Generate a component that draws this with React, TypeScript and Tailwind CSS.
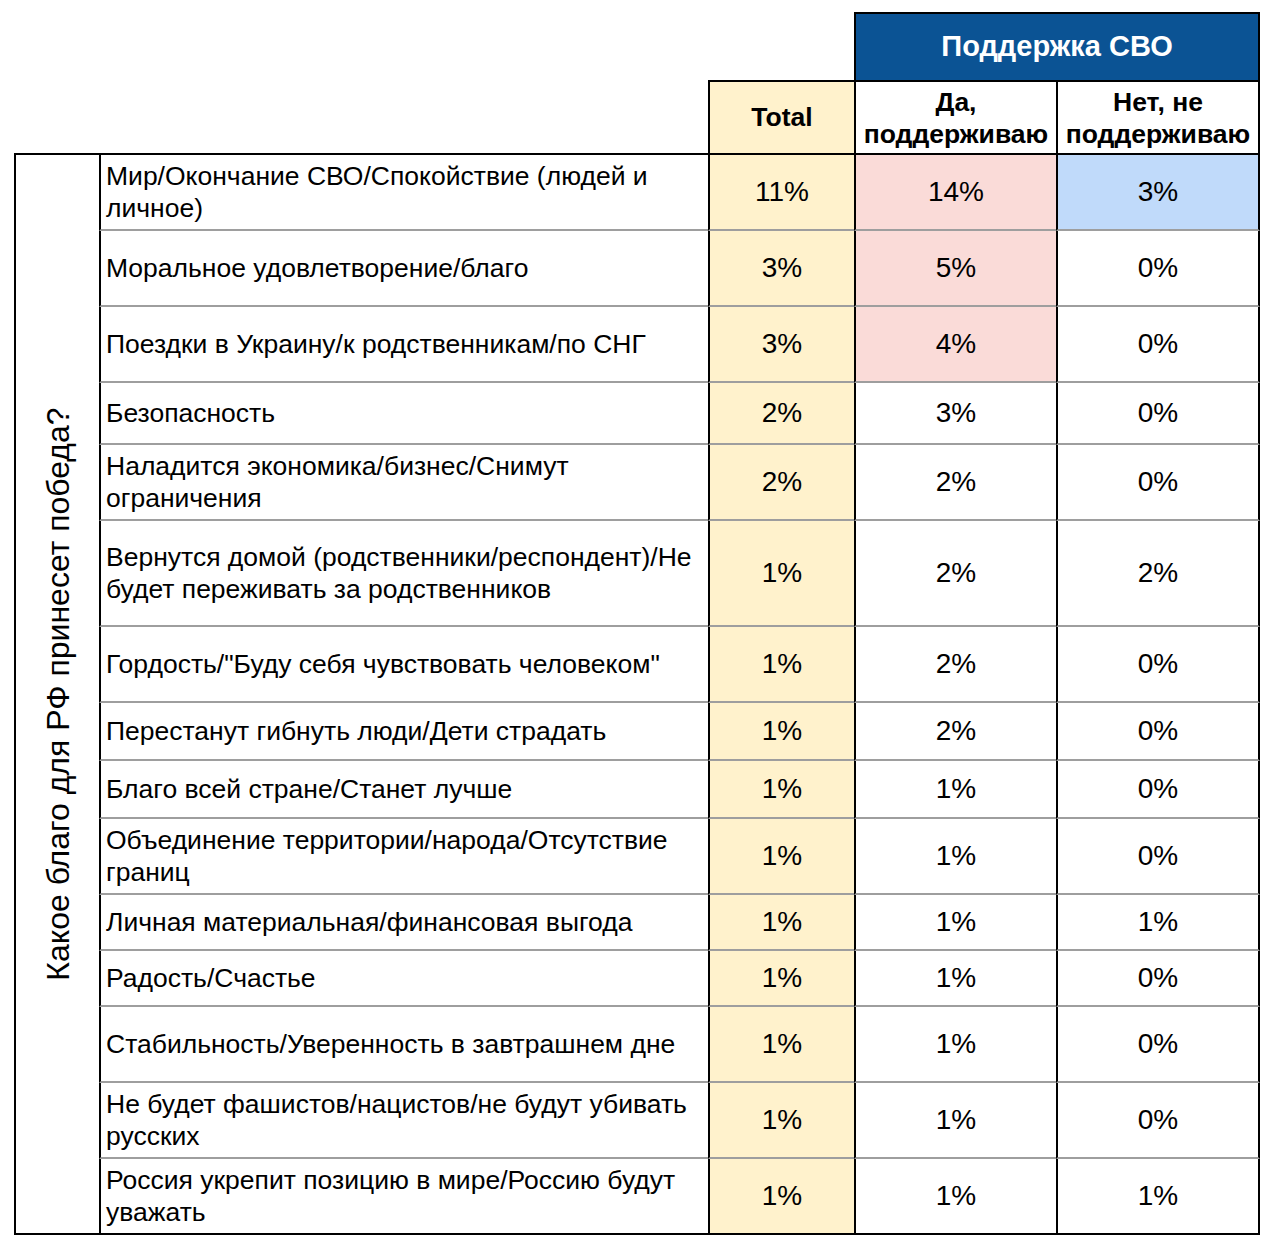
const rows: { label: string; h: string; total: string; yes: string; no: string; yesBg?: string; noBg?: string }[] = [
  { label: "Мир/Окончание СВО/Спокойствие (людей и личное)", h: "h-[76px]", total: "11%", yes: "14%", no: "3%", yesBg: "bg-[#fadbd8]", noBg: "bg-[#c0dafa]" },
  { label: "Моральное удовлетворение/благо", h: "h-[76px]", total: "3%", yes: "5%", no: "0%", yesBg: "bg-[#fadbd8]" },
  { label: "Поездки в Украину/к родственникам/по СНГ", h: "h-[76px]", total: "3%", yes: "4%", no: "0%", yesBg: "bg-[#fadbd8]" },
  { label: "Безопасность", h: "h-[62px]", total: "2%", yes: "3%", no: "0%" },
  { label: "Наладится экономика/бизнес/Снимут ограничения", h: "h-[76px]", total: "2%", yes: "2%", no: "0%" },
  { label: "Вернутся домой (родственники/респондент)/Не будет переживать за родственников", h: "h-[106px]", total: "1%", yes: "2%", no: "2%" },
  { label: "Гордость/\"Буду себя чувствовать человеком\"", h: "h-[76px]", total: "1%", yes: "2%", no: "0%" },
  { label: "Перестанут гибнуть люди/Дети страдать", h: "h-[58px]", total: "1%", yes: "2%", no: "0%" },
  { label: "Благо всей стране/Станет лучше", h: "h-[58px]", total: "1%", yes: "1%", no: "0%" },
  { label: "Объединение территории/народа/Отсутствие границ", h: "h-[76px]", total: "1%", yes: "1%", no: "0%" },
  { label: "Личная материальная/финансовая выгода", h: "h-[56px]", total: "1%", yes: "1%", no: "1%" },
  { label: "Радость/Счастье", h: "h-[56px]", total: "1%", yes: "1%", no: "0%" },
  { label: "Стабильность/Уверенность в завтрашнем дне", h: "h-[76px]", total: "1%", yes: "1%", no: "0%" },
  { label: "Не будет фашистов/нацистов/не будут убивать русских", h: "h-[76px]", total: "1%", yes: "1%", no: "0%" },
  { label: "Россия укрепит позицию в мире/Россию будут уважать", h: "h-[76px]", total: "1%", yes: "1%", no: "1%" },
]

export default function App() {
  return (
    <div className="min-h-[1250px] w-[1272px] bg-white pt-[12px] pl-[14px] text-black font-['Liberation_Sans',Arial,sans-serif]">
      {/* header */}
      <div className="flex h-[68px]">
        <div className="w-[840px]" />
        <div className="w-[406px] bg-[#0b5394] border-2 border-b-0 border-black flex items-center justify-center text-white font-bold text-[29px]">
          Поддержка СВО
        </div>
      </div>
      <div className="flex h-[75px]">
        <div className="w-[694px] border-b-2 border-black" />
        <div className="w-[146px] bg-[#fff2cc] border-2 border-r-0 border-black flex items-center justify-center font-bold text-[26.5px]">
          Total
        </div>
        <div className="w-[202px] border-2 border-r-0 border-black flex items-center justify-center text-center font-bold text-[26.5px] leading-[32px]">
          Да,<br />поддерживаю
        </div>
        <div className="w-[204px] border-2 border-black flex items-center justify-center text-center font-bold text-[26.5px] leading-[32px]">
          Нет, не<br />поддерживаю
        </div>
      </div>

      {/* body */}
      <div className="flex">
        <div className="w-[85px] border-l-2 border-b-2 border-black flex items-center justify-center">
          <div className="-rotate-90 whitespace-nowrap text-[32px]">Какое благо для РФ принесет победа?</div>
        </div>
        <div className="flex flex-col">
          {rows.map((r, i) => {
            const last = i === rows.length - 1
            const bottom = last ? "border-b-2 border-b-black" : "border-b-2 border-b-[#9e9e9e]"
            return (
              <div key={i} className={`flex ${r.h} leading-[32px]`}>
                <div className={`w-[609px] border-l-2 border-l-black ${bottom} flex items-center pl-[5px] pr-[6px] text-[26.5px]`}>
                  {r.label}
                </div>
                <div className={`w-[146px] bg-[#fff2cc] border-l-2 border-l-black ${bottom} flex items-center justify-center text-[28px]`}>
                  {r.total}
                </div>
                <div className={`w-[202px] ${r.yesBg ?? "bg-white"} border-l-2 border-l-black ${bottom} flex items-center justify-center text-[28px]`}>
                  {r.yes}
                </div>
                <div className={`w-[204px] ${r.noBg ?? "bg-white"} border-l-2 border-r-2 border-l-black border-r-black ${bottom} flex items-center justify-center text-[28px]`}>
                  {r.no}
                </div>
              </div>
            )
          })}
        </div>
      </div>
    </div>
  )
}
